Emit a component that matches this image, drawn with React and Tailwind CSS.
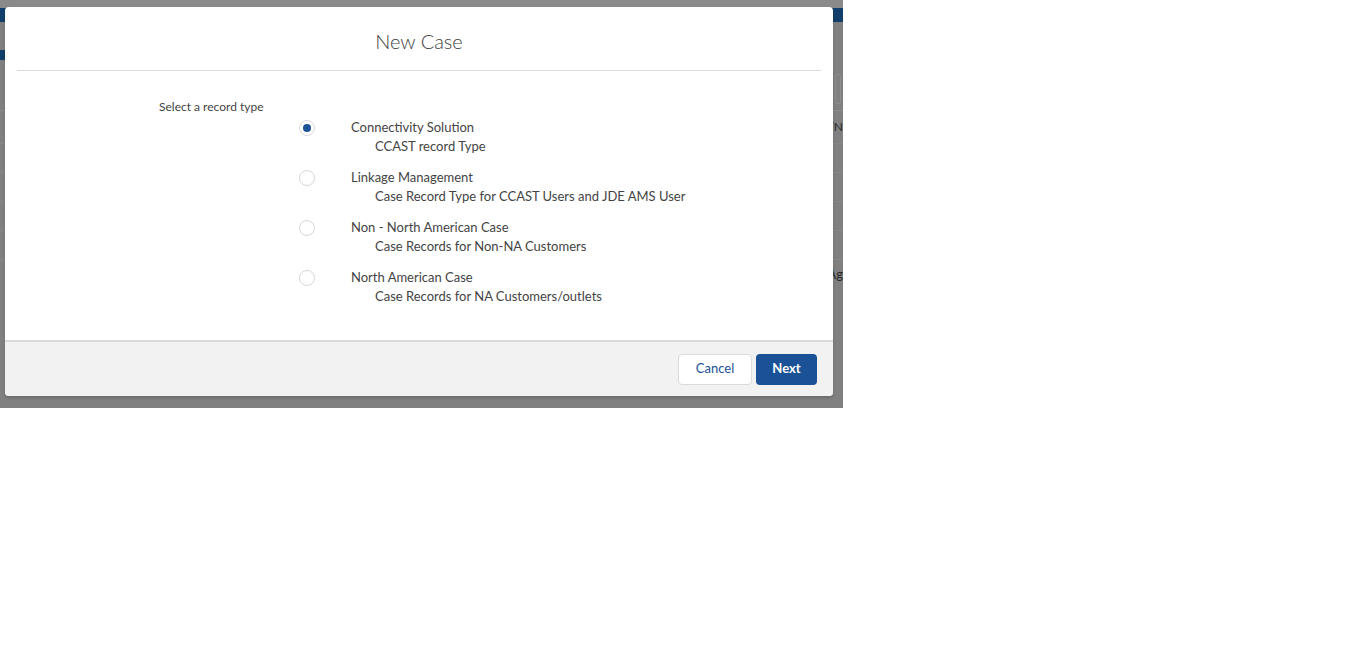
import React from "react";

const options = [
  { label: "Connectivity Solution", desc: "CCAST record Type", checked: true },
  { label: "Linkage Management", desc: "Case Record Type for CCAST Users and JDE AMS User" },
  { label: "Non - North American Case", desc: "Case Records for Non-NA Customers" },
  { label: "North American Case", desc: "Case Records for NA Customers/outlets" },
];

function Radio({ checked }) {
  return (
    <span className="w-[16px] h-[16px] rounded-full border border-[#d8d8d8] bg-white flex items-center justify-center shrink-0">
      {checked && <span className="w-[8px] h-[8px] rounded-full bg-[#1b5297]" />}
    </span>
  );
}

export default function App() {
  return (
    <div className="w-[1366px] h-[659px] bg-white" style={{ fontFamily: '"Lato", "Open Sans", sans-serif' }}>
      <div className="relative w-[843px] h-[408px] bg-[#808080] overflow-hidden">
        {/* dimmed page behind */}
        <div className="flex flex-col">
          <div className="h-[8px] bg-[#8a8a8a]" />
          <div className="h-[14px] bg-[#123e6b]" />
          <div className="h-[28px]" />
          <div className="h-[14px] flex">
            <span className="w-[5px] h-[10px] bg-[#123e6b]" />
          </div>
          <div className="h-[10px]" />
          <div className="h-[36px] flex justify-end pr-[2px] gap-[2px]">
            <span className="w-[6px] h-[30px] border border-[#8e8e8e] rounded-[2px]" />
          </div>
          <div className="h-[33px] border-t border-[#8c8c8c] flex justify-end items-center text-[12px] text-[#2a2a2a]">/N</div>
          <div className="h-[29px] border-t border-[#878787]" />
          <div className="h-[29px] border-t border-[#878787]" />
          <div className="h-[29px] border-t border-[#878787]" />
          <div className="h-[29px] border-t border-[#878787]" />
          <div className="h-[30px] border-t border-[#878787] flex justify-end items-center text-[13px] text-[#2a2a2a]">Ag</div>
        </div>

        {/* modal */}
        <div className="absolute left-[5px] top-[7px] w-[828px] h-[389px] bg-white rounded-[4px] shadow-[0_2px_3px_rgba(0,0,0,0.16)] flex flex-col overflow-hidden">
          <div className="mx-[12px] h-[64px] border-b border-[#dddbda] flex items-center justify-center">
            <h2 className="text-[20px] font-light text-[#3e3e3c] pt-[5px]">New Case</h2>
          </div>
          <div className="flex-1 relative">
            <div className="pl-[154px] pt-[28px] text-[12px] text-[#444444] leading-[16px]">Select a record type</div>
            <div className="flex flex-col pl-[294px] pt-[3px] gap-[12px]">
              {options.map((o) => (
                <div key={o.label} className="flex items-start">
                  <span className="pt-[2px]"><Radio checked={o.checked} /></span>
                  <div className="pl-[36px] text-[13px] text-[#444444] leading-[19px]">
                    <div>{o.label}</div>
                    <div className="pl-[24px]">{o.desc}</div>
                  </div>
                </div>
              ))}
            </div>
          </div>
          <div className="h-[56px] border-t-2 border-[#dddbda] bg-[#f3f2f2] flex items-center justify-end gap-[4px] pr-[16px]">
            <button className="h-[31px] w-[74px] rounded-[4px] border border-[#dddbda] bg-white text-[13px] text-[#1b5297]">Cancel</button>
            <button className="h-[31px] w-[61px] rounded-[4px] bg-[#1b5297] text-[13px] font-bold text-white">Next</button>
          </div>
        </div>
      </div>
    </div>
  );
}
